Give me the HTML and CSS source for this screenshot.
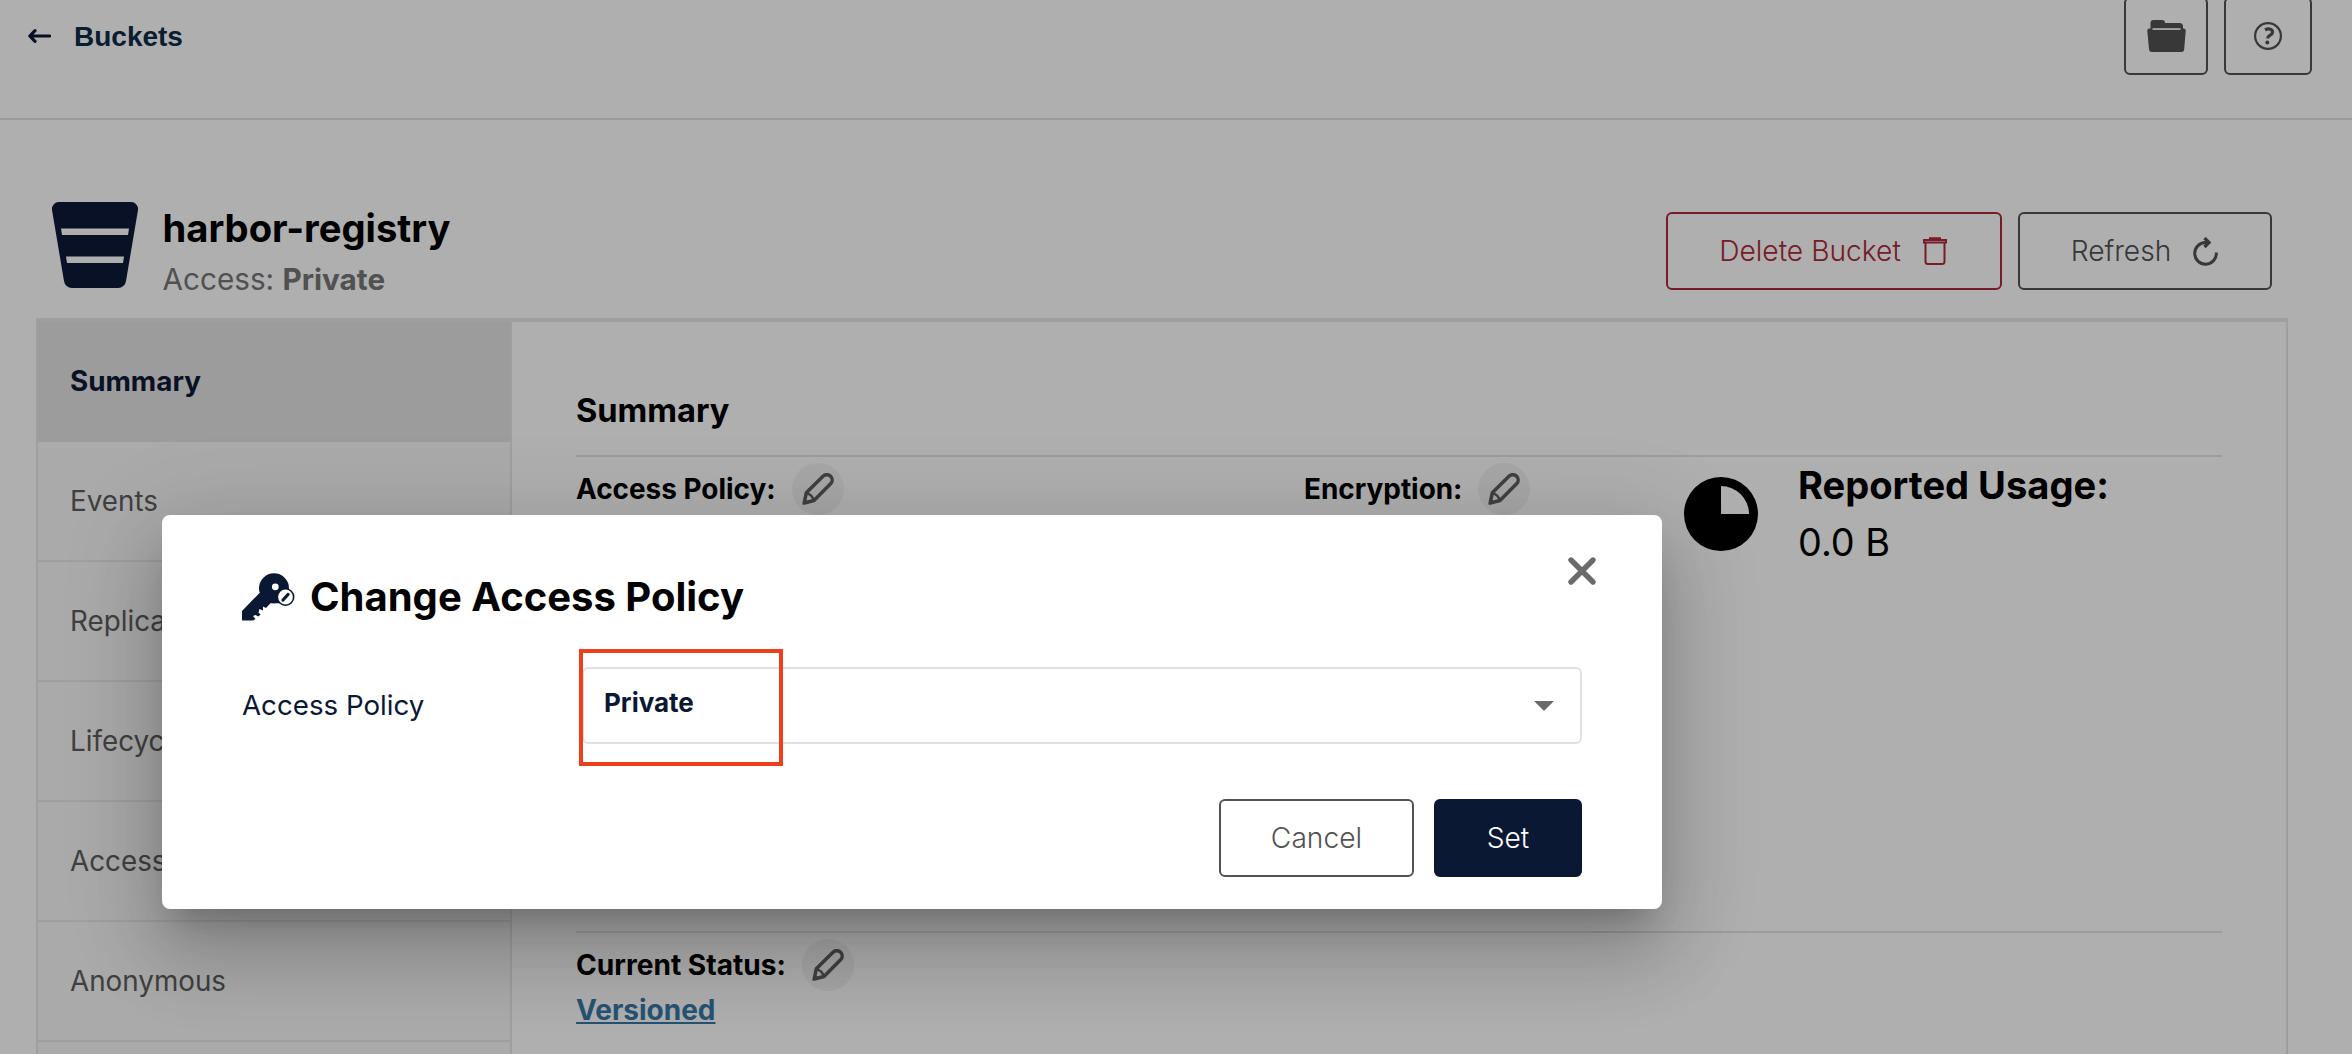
FILE: index.html
```html
<!DOCTYPE html>
<html lang="en">
<head>
<meta charset="utf-8">
<title>harbor-registry</title>
<link rel="stylesheet" href="styles.css">
</head>
<body>
<svg class="defs" width="0" height="0">
  <symbol id="pencil" viewBox="0 0 32 32">
    <path d="M4.300 19.800 21 3.200a5.300 5.300 0 0 1 7.600 7.600L12 27.500 2.200 30Z" fill="none" stroke="currentColor" stroke-width="3.500" stroke-linejoin="round"/>
    <path d="M4.300 20.500c3.700.3 6.700 3.300 7.200 7" fill="none" stroke="currentColor" stroke-width="2.600"/>
    <path d="M2.300 25 7 29.700.500 31.800Z" fill="currentColor"/>
  </symbol>
</svg>
<div class="app">
  <header class="topbar">
    <a class="back">
      <svg class="back-arrow" width="23" height="14" viewBox="0 0 23 14"><path d="M7 1.700 1.800 7 7 12.300M2 7h19.500" fill="none" stroke="currentColor" stroke-width="3.200" stroke-linecap="round" stroke-linejoin="round"/></svg>
      <span>Buckets</span>
    </a>
    <div class="tools">
      <button class="tool folder">
        <svg width="39" height="32" viewBox="0 0 39 32" fill="currentColor"><path d="M3.500 9V3a3 3 0 0 1 3-3H15a3 3 0 0 1 3 3h14.500a3.500 3.500 0 0 1 3.500 3.500V9Z"/><path d="M2.500 8.500h34a2.200 2.200 0 0 1 2.200 2.500l-1.500 18a3 3 0 0 1-3 3H5a3 3 0 0 1-3-3L.300 11A2.200 2.200 0 0 1 2.500 8.500Z"/><path class="slot" d="M5.500 8.200h28v1.700H5.500Z"/></svg>
      </button>
      <button class="tool help">
        <svg width="28" height="28" viewBox="0 0 28 28"><circle cx="14" cy="14" r="12.900" fill="none" stroke="currentColor" stroke-width="2.200"/><path d="M11 7.800c4-1.800 7.700-.500 7.500 2.500-.2 3.200-4.800 2.600-4.800 6.200" fill="none" stroke="currentColor" stroke-width="3.200"/><circle cx="13.300" cy="20.500" r="2" fill="currentColor"/></svg>
      </button>
    </div>
  </header>
  <main class="page">
    <section class="title-row">
      <svg class="bucket" width="86" height="86" viewBox="0 0 86 86"><path fill="currentColor" fill-rule="evenodd" d="M7 0h72a7 7 0 0 1 7 8L74 79a8 8 0 0 1-8 7H20a8 8 0 0 1-8-7L0 8a7 7 0 0 1 7-8ZM9 26.500 10 33h66l1-6.500ZM14 54.500l1 6.500h56l1-6.500Z"/></svg>
      <div class="title-text">
        <h1>harbor-registry</h1>
        <p>Access: <b>Private</b></p>
      </div>
      <div class="actions">
        <button class="btn danger"><span>Delete Bucket</span>
          <svg width="24" height="28" viewBox="0 0 24 28" fill="none" stroke="currentColor" stroke-width="2"><path d="M1 3h22v2.500H1ZM7 3V1.200h10V3M2.500 6v18.500a2.500 2.500 0 0 0 2.500 2.500h14a2.500 2.500 0 0 0 2.500-2.500V6"/></svg>
        </button>
        <button class="btn refresh"><span>Refresh</span>
          <svg width="25" height="29" viewBox="0 0 25 29" fill="none" stroke="currentColor" stroke-width="3"><path d="M15 5.600h-2.500A10.800 10.800 0 1 0 23.300 15.500"/><path d="M11.500 1 16 5.500 11.500 10" stroke-width="3.300"/></svg>
        </button>
      </div>
    </section>
    <section class="panel">
      <nav class="tabs">
        <a class="tab active">Summary</a>
        <a class="tab">Events</a>
        <a class="tab">Replication</a>
        <a class="tab">Lifecycle</a>
        <a class="tab">Access</a>
        <a class="tab">Anonymous</a>
        <a class="tab"></a>
      </nav>
      <div class="content">
        <h2>Summary</h2>
        <div class="summary">
          <div class="field">Access Policy:<i class="edit"><svg width="32" height="32"><use href="#pencil"/></svg></i></div>
          <div class="field">Encryption:<i class="edit"><svg width="32" height="32"><use href="#pencil"/></svg></i></div>
          <div class="usage">
            <svg width="74" height="74" viewBox="0 0 74 74"><path fill-rule="evenodd" d="M37 0a37 37 0 1 1 0 74a37 37 0 0 1 0-74ZM37 9v28h28A28 28 0 0 0 37 9Z"/></svg>
            <div><h3>Reported Usage:</h3><p>0.0 B</p></div>
          </div>
        </div>
        <div class="versioning">
          <div class="field status">Current Status:<i class="edit"><svg width="32" height="32"><use href="#pencil"/></svg></i></div>
          <a class="versioned">Versioned</a>
        </div>
      </div>
    </section>
  </main>
</div>
<div class="backdrop">
  <div class="dialog" role="dialog">
    <div class="dialog-head">
      <svg class="key" width="53" height="48" viewBox="0 0 53 48"><g fill="currentColor"><circle cx="32" cy="15.300" r="15"/><path d="M17.500 20 40 30.300H28.500L24 35l-3-1.500v4l-3.500-1.500-1 3.500 2 2-2 2-3-1.500-2.500 1 2.500 3L11 47.500H0V38Z"/></g><circle cx="33.300" cy="13.800" r="3.400" fill="#fff"/><circle cx="43.500" cy="24" r="8.200" fill="#fff" stroke="currentColor" stroke-width="1.600"/><path d="m41 27 5-5.500" stroke="currentColor" stroke-width="3.200" stroke-linecap="round"/></svg>
      <h2>Change Access Policy</h2>
      <svg class="close" width="30" height="30" viewBox="0 0 30 30"><path d="m4 4 22 22M26 4 4 26" stroke="currentColor" stroke-width="5.400" stroke-linecap="round"/></svg>
    </div>
    <div class="form-row">
      <label>Access Policy</label>
      <div class="select"><b>Private</b><svg width="20" height="10" viewBox="0 0 20 10"><path d="M0 0h20L10 10Z" fill="currentColor"/></svg><span class="marker"></span></div>
    </div>
    <div class="dialog-actions">
      <button class="btn cancel">Cancel</button>
      <button class="btn set">Set</button>
    </div>
  </div>
</div>
</body>
</html>
```
FILE: styles.css
```css
* { box-sizing: border-box; }
body { margin: 0; height: 1054px; overflow: hidden; background: #fff; font-family: Inter, sans-serif; color: #000; }
h1, h2, h3, p { margin: 0; }
svg { display: block; flex: none; }
.defs { position: absolute; }
button { font-family: inherit; background: none; }
.app { height: 1054px; overflow: hidden; }

.topbar { height: 120px; border-bottom: 2px solid #e2e2e2; display: flex; justify-content: space-between; padding: 0 40px 0 28px; }
.back { display: flex; align-items: center; gap: 23px; height: 72px; color: #0a1733; }
.back span { font: bold 28px/32px "Liberation Sans", sans-serif; color: #0e2c48; padding-top: 2px; }
.tools { display: flex; gap: 16px; margin-top: -3px; }
.tool { height: 78px; border: 2px solid #525252; border-radius: 6px; color: #525252; display: flex; align-items: center; justify-content: center; padding: 0; }
.folder { width: 84px; }
.help { width: 88px; }
.slot { fill: #fff; }

.page { padding: 80px 64px 0 36px; }
.title-row { height: 118px; display: flex; align-items: flex-start; padding: 2px 16px 0; }
.bucket { color: #0c1a36; }
.title-text { margin-left: 24.500px; padding-top: 1px; }
.title-text h1 { font-size: 38.2px; line-height: 51px; }
.title-text p { font-size: 29.7px; line-height: 50px; color: #767676; }
.actions { margin-left: auto; display: flex; gap: 16px; padding-top: 10px; }
.btn { height: 78px; border: 2px solid #525252; border-radius: 6px; font-size: 28.200px; font-weight: 350; color: #525252; display: flex; align-items: center; justify-content: center; padding: 0; }
.danger { width: 336px; border-color: #ae2a38; color: #ae2a38; gap: 22px; padding-right: 2px; }
.refresh { width: 254px; gap: 22px; padding-right: 1px; }

.panel { height: 800px; border: 2px solid #e8e8e8; border-top: 4px solid #e8e8e8; display: flex; }
.tabs { width: 474px; border-right: 2px solid #e8e8e8; background: #f8f8f8; }
.tab { display: flex; align-items: center; height: 120px; border-bottom: 2px solid #e8e8e8; padding-left: 32px; font-size: 27.8px; color: #5e5e5e; }
.active { background: #e3e3e3; border-color: #e3e3e3; color: #0c1a36; font-weight: bold; }
.content { flex: 1; padding: 63px 64px 0; }
.content h2 { height: 72px; font-size: 32.600px; line-height: 51px; border-bottom: 2px solid #e3e3e3; }
.summary { display: grid; grid-template-columns: 728px 380px 1fr; height: 476px; border-bottom: 2px solid #e3e3e3; }
.field { display: flex; align-items: center; height: 52px; margin-top: 6px; font-size: 27.9px; font-weight: bold; }
.status { font-size: 28.1px; }
.edit { width: 52px; height: 52px; border-radius: 50%; background: #f3f3f3; margin-left: 16px; display: flex; align-items: center; justify-content: center; color: #5e5e5e; }
.usage { display: flex; padding-top: 20px; }
.usage div { margin-left: 40px; margin-top: -20px; }
.usage h3 { font-size: 38.100px; line-height: 56px; }
.usage p { font-size: 37.800px; line-height: 58px; }
.versioned { font-size: 28px; line-height: 38px; font-weight: bold; color: #387aa6; text-decoration: underline; }

.backdrop { position: absolute; inset: 0; background: rgba(0, 0, 0, .314); }
.dialog { position: absolute; left: 162px; top: 515px; width: 1500px; height: 394px; border-radius: 8px; background: #fff; padding: 41px 80px 0; box-shadow: 0 22px 30px -14px rgba(0,0,0,.2), 0 48px 76px 6px rgba(0,0,0,.14), 0 18px 92px 16px rgba(0,0,0,.12); }
.dialog-head { display: flex; align-items: flex-start; height: 111px; color: #0a1833; }
.key { margin-top: 17px; }
.dialog-head h2 { margin: 16px 0 0 15px; font-size: 40px; line-height: 50px; color: #000; }
.close { margin: 0 -15px 0 auto; color: #6b6b6b; }
.form-row { display: flex; align-items: center; height: 77px; color: #0a1833; }
.form-row label { width: 340px; font-size: 27.7px; padding-bottom: 1px; }
.select { position: relative; width: 1000px; height: 77px; border: 2px solid #e0e0e0; border-radius: 6px; display: flex; align-items: center; justify-content: space-between; padding: 0 26px 6px 20px; font-size: 26px; }
.select svg { color: #6b6b6b; position: relative; top: 3px; }
.marker { position: absolute; left: -5px; top: -20px; width: 204px; height: 117px; border: 4px solid #ef3e1c; }
.dialog-actions { display: flex; justify-content: flex-end; gap: 20px; padding-top: 55px; }
.cancel { width: 195px; }
.set { width: 148px; background: #0a1833; border-color: #0a1833; color: #fff; }
```
